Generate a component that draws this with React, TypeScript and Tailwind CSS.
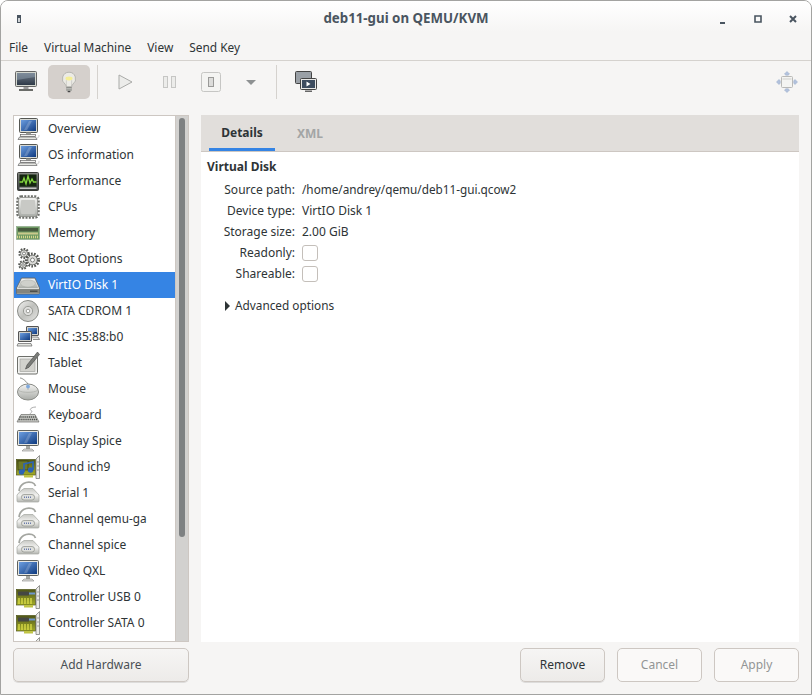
import React from "react";

const P = ({ children, s = 24 }: { children: React.ReactNode; s?: number }) => (
  <svg width={s} height={s} viewBox="0 0 24 24" className="shrink-0">{children}</svg>
);

const Defs = () => (
  <svg width="0" height="0" className="absolute">
    <defs>
      <linearGradient id="scr" x1="0" y1="0" x2="1" y2="1"><stop offset="0" stopColor="#6c9ee0" /><stop offset="1" stopColor="#0f3a80" /></linearGradient>
      <linearGradient id="gry" x1="0" y1="0" x2="0" y2="1"><stop offset="0" stopColor="#f4f4f2" /><stop offset="1" stopColor="#a9aca7" /></linearGradient>
      <linearGradient id="ser" x1="0" y1="0" x2="0" y2="1"><stop offset="0" stopColor="#c8c9c5" /><stop offset=".5" stopColor="#f2f2f0" /><stop offset="1" stopColor="#b5b7b2" /></linearGradient>
      <linearGradient id="drk" x1="0" y1="0" x2="0" y2="1"><stop offset="0" stopColor="#888a85" /><stop offset="1" stopColor="#3a3e3f" /></linearGradient>
      <linearGradient id="pcb" x1="0" y1="0" x2="0" y2="1"><stop offset="0" stopColor="#4f5618" /><stop offset="1" stopColor="#a3ac28" /></linearGradient>
      <linearGradient id="cd" x1="0" y1="0" x2="1" y2="1"><stop offset="0" stopColor="#f4f4f3" /><stop offset=".5" stopColor="#bfc0bc" /><stop offset="1" stopColor="#e6e6e4" /></linearGradient>
      <linearGradient id="bar" x1="0" y1="0" x2="0" y2="1"><stop offset="0" stopColor="#6f7a87" /><stop offset="1" stopColor="#2f3a48" /></linearGradient>
    </defs>
  </svg>
);

const Desktop = () => (
  <P>
    <rect x="3.500" y="1.500" width="18" height="14" rx="1" fill="#d9dbd6" stroke="#555753" />
    <rect x="5" y="3" width="15" height="11" fill="url(#scr)" />
    <path d="M8 13l5-9h3l-5 9z" fill="#fff" opacity=".2" />
    <rect x="10" y="15.500" width="5" height="2" fill="#9a9c97" />
    <rect x="4.500" y="17.500" width="15" height="2" fill="#f2f2f0" stroke="#666" strokeWidth=".7" />
    <path d="M3.500 20h16l1.500 2.500H2z" fill="#e4e5e1" stroke="#666" strokeWidth=".7" />
    <path d="M21 21c1.500 0 2-1 2-3" fill="none" stroke="#bbb" strokeWidth=".7" />
  </P>
);
const Perf = () => (
  <P>
    <rect x="1.500" y="3.500" width="21" height="18" rx="1" fill="url(#drk)" stroke="#3a3c38" />
    <rect x="3.500" y="5.500" width="17" height="12" fill="#14260f" />
    <path d="M3.500 13h3l1.500-4 2 6 2-8 2 7 2-4 1.500 3h3" fill="none" stroke="#83d63f" strokeWidth="1.300" />
    <rect x="3.500" y="18.500" width="17" height="1.500" fill="#c4c4c2" />
  </P>
);
const Cpu = () => (
  <P>
    <rect x="1.500" y="1.500" width="21" height="21" rx="3.500" fill="none" stroke="#6f716c" strokeWidth="2.500" strokeDasharray="2 1.300" />
    <rect x="2.500" y="2.500" width="19" height="19" rx="2.500" fill="url(#gry)" stroke="#8a8c87" strokeWidth=".8" />
    <rect x="5" y="5" width="14" height="14" rx="1" fill="#c8c9c5" />
  </P>
);
const Mem = () => (
  <P>
    <rect x=".5" y="5.500" width="23" height="13" fill="#6f9a64" stroke="#8aa585" strokeWidth=".6" />
    <rect x="2" y="7" width="20" height="3.500" fill="#475a3e" />
    <rect x="2" y="11.500" width="20" height="2" fill="#c9c98c" />
    <path d="M1 16h22" stroke="#d6d48a" strokeWidth="2.500" strokeDasharray="1 1" />
  </P>
);
const Gear = ({ x, y, r }: { x: number; y: number; r: number }) => (
  <g>
    <circle cx={x} cy={y} r={r} fill="none" stroke="#555753" strokeWidth={r * 0.5} strokeDasharray="1.600 1.300" />
    <circle cx={x} cy={y} r={r * 0.8} fill="#dcdcd9" stroke="#555753" strokeWidth=".7" />
    <circle cx={x} cy={y} r={r * 0.33} fill="#fff" stroke="#555753" strokeWidth=".7" />
  </g>
);
const Boot = () => (
  <P>
    <Gear x={8} y={6.500} r={4.500} />
    <Gear x={16.500} y={13} r={6} />
    <Gear x={7} y={18} r={3.800} />
  </P>
);
const Disk = () => (
  <P>
    <path d="M5.500 5h13.500l4.500 10v5a1 1 0 01-1 1H1.500a1 1 0 01-1-1v-5z" fill="#dededb" stroke="#5f615d" strokeWidth=".8" />
    <path d="M6 6h12.500l3.500 9H2z" fill="url(#gry)" />
    <ellipse cx="12" cy="10.500" rx="7.500" ry="3.600" fill="#cfd0cb" stroke="#a4a6a1" strokeWidth=".5" />
    <rect x="1" y="16" width="22" height="4.500" fill="#83857f" />
    <rect x="14" y="17.500" width="7.500" height="1.500" fill="#4c4e4a" />
  </P>
);
const Cd = () => (
  <P>
    <circle cx="12" cy="12" r="10.500" fill="url(#cd)" stroke="#8a8c87" />
    <circle cx="12" cy="12" r="4.600" fill="#dfdfdd" stroke="#9a9c97" />
    <circle cx="12" cy="12" r="1.800" fill="#fff" stroke="#8a8c87" strokeWidth=".8" />
  </P>
);
const Nic = () => (
  <P>
    <rect x="10.500" y="1.500" width="12" height="9" rx=".5" fill="#cfd0cc" stroke="#555" />
    <rect x="12" y="3" width="9" height="6" fill="url(#scr)" />
    <path d="M14 12h8l1.500 2.500H17" fill="#e4e5e1" stroke="#666" strokeWidth=".7" />
    <rect x="2.500" y="6.500" width="13" height="10" rx=".5" fill="#cfd0cc" stroke="#555" />
    <rect x="4" y="8" width="10" height="7" fill="url(#scr)" />
    <path d="M2 18.500h13l1 2.500H1z" fill="#e4e5e1" stroke="#666" strokeWidth=".7" />
  </P>
);
const Tablet = () => (
  <P>
    <rect x="1.500" y="5.500" width="20" height="17.500" rx="1.500" fill="#f2f2f0" stroke="#6d6f6a" />
    <rect x="4" y="8" width="15" height="12.500" fill="#d2d2cd" stroke="#9a9c97" strokeWidth=".6" />
    <path d="M21.500 1L11 14l-1.500 4 3.500-1.800L23.500 3.500z" fill="#7a7c78" stroke="#444" strokeWidth=".6" />
  </P>
);
const Mouse = () => (
  <P>
    <path d="M4 1c2 0 5 2 8 6" fill="none" stroke="#7d7f7a" strokeWidth=".9" />
    <ellipse cx="12" cy="15" rx="10.500" ry="8" fill="url(#gry)" stroke="#8a8c87" />
    <path d="M2.500 13.500c4 2.500 15 2.500 19 0" fill="none" stroke="#b5b7b2" />
    <path d="M12 7v6" stroke="#b5b7b2" />
    <circle cx="12" cy="9.500" r="1.900" fill="#7fa9dd" />
  </P>
);
const Kbd = () => (
  <P>
    <path d="M20 4c-4 0-7 2-5 3.500 2 1 0 2-1 3.500" fill="none" stroke="#999" strokeWidth=".8" />
    <path d="M5 11.500h14l4 7.500H1z" fill="#c9cac6" stroke="#6d6f6a" strokeWidth=".7" />
    <path d="M3.500 14h17M2.700 16.500h18.600" stroke="#4f514d" strokeWidth="1.400" strokeDasharray="1.200 .7" />
  </P>
);
const Display = () => (
  <P>
    <rect x="1.500" y="1.500" width="21" height="15" rx="1" fill="#e6e7e3" stroke="#5f615d" />
    <rect x="3" y="3" width="18" height="12" fill="url(#scr)" />
    <path d="M8 14l5-10h3l-5 10z" fill="#fff" opacity=".18" />
    <rect x="10" y="17" width="4" height="3" fill="#a5a7a2" />
    <path d="M6 22l2-2h8l2 2z" fill="#dcdcd9" stroke="#888" strokeWidth=".6" />
  </P>
);
const Serial = () => (
  <P>
    <path d="M3 10C4 3 10 0 16 1.500c2 .5 3 2 3.500 3.500" fill="none" stroke="#a4a6a1" strokeWidth="1.800" />
    <path d="M4.500 10L8 7.500h9L23 14v6a1 1 0 01-1 1H2a1 1 0 01-1-1v-6z" fill="url(#ser)" stroke="#a4a6a1" strokeWidth=".7" />
    <rect x="5.500" y="13.500" width="13" height="5.500" rx="2.500" fill="#dfe0dc" stroke="#8a8c87" strokeWidth=".7" />
    <path d="M8 16.300h8" stroke="#6a7bab" strokeWidth="1.400" strokeDasharray="1 1" />
  </P>
);
const Card = ({ sound }: { sound?: boolean }) => (
  <P>
    <rect x=".5" y="4.500" width="19" height="15.500" fill="url(#pcb)" stroke="#4f5518" strokeWidth=".7" />
    <rect x="8" y="20" width="9" height="2.500" fill="#c0c446" />
    <path d="M20 4l3.500-3.500V23.500H20z" fill="#ecece9" stroke="#6d6f6a" strokeWidth=".7" />
    <path d="M21.500 7h1M21.500 11h1M21.500 15h1" stroke="#555" />
    {sound ? (
      <>
        <rect x="2" y="6" width="10" height="9" fill="#6f7a2a" stroke="#34390e" strokeWidth=".6" />
        <path d="M8 17V9l9-2v8" fill="none" stroke="#2c63b5" strokeWidth="1.700" />
        <circle cx="5.500" cy="17" r="2.700" fill="#2c63b5" />
        <circle cx="14.500" cy="15" r="2.700" fill="#2c63b5" />
      </>
    ) : (
      <>
        <rect x="2" y="6.500" width="11" height="4" rx=".5" fill="#454743" />
        <rect x="13" y="7.500" width="6" height="2" fill="#6d96cf" />
        <path d="M3 19v-6M6 19v-6M9 19v-6M12 19v-6M15 19v-6" stroke="#dfe04a" strokeWidth="1.300" />
      </>
    )}
  </P>
);

const rows: [React.ReactNode, string][] = [
  [<Desktop />, "Overview"],
  [<Desktop />, "OS information"],
  [<Perf />, "Performance"],
  [<Cpu />, "CPUs"],
  [<Mem />, "Memory"],
  [<Boot />, "Boot Options"],
  [<Disk />, "VirtIO Disk 1"],
  [<Cd />, "SATA CDROM 1"],
  [<Nic />, "NIC :35:88:b0"],
  [<Tablet />, "Tablet"],
  [<Mouse />, "Mouse"],
  [<Kbd />, "Keyboard"],
  [<Display />, "Display Spice"],
  [<Card sound />, "Sound ich9"],
  [<Serial />, "Serial 1"],
  [<Serial />, "Channel qemu-ga"],
  [<Serial />, "Channel spice"],
  [<Display />, "Video QXL"],
  [<Card />, "Controller USB 0"],
  [<Card />, "Controller SATA 0"],
  [<Card />, ""],
];

const Btn = ({ children, off, w }: { children: string; off?: boolean; w: string }) => (
  <button
    className={`h-[34px] rounded-[5px] border text-[12px] ${w} ${
      off
        ? "border-[#cdc7c2] bg-[#faf9f8] text-[#929595]"
        : "border-[#cdc7c2] bg-gradient-to-b from-[#f6f5f4] to-[#edebe9] text-[#2e3436] shadow-[0_1px_0_rgba(0,0,0,0.1)]"
    }`}
  >
    {children}
  </button>
);

const Field = ({ label, children }: { label: string; children: React.ReactNode }) => (
  <div className="flex h-[21px] items-center">
    <div className="w-[88px] text-right text-[#2e3436]">{label}</div>
    <div className="ml-[7px] flex items-center">{children}</div>
  </div>
);

const Check = () => <div className="h-4 w-4 rounded-[3px] border border-[#c4bfba] bg-white" />;

export default function App() {
  return (
    <div
      className="flex h-[695px] w-[812px] flex-col overflow-hidden rounded-t-[8px] border border-[#a3a3a1] bg-[#f6f5f4] text-[12px] text-[#2e3436]"
      style={{ fontFamily: '"Noto Sans", sans-serif' }}
    >
      <Defs />
      <header className="flex h-[31px] shrink-0 items-center bg-gradient-to-b from-white to-[#f6f5f4] pt-[4px]">
        <div className="flex w-[97px] shrink-0 pl-[16px]">
          <svg width="4" height="8" viewBox="0 0 4 8">
            <rect width="4" height="8" fill="#4a5560" />
            <rect x="1" y="3" width="2" height="4" fill="#cfd3d6" />
          </svg>
        </div>
        <div className="flex-1 text-center text-[13.3px] leading-none font-bold text-[#4a5560]">deb11-gui on QEMU/KVM</div>
        <div className="flex w-[97px] shrink-0 items-center justify-end pr-[13px]">
          <svg width="10" height="10" viewBox="0 0 10 10" className="shrink-0">
            <rect x="2" y="8" width="5" height="2" fill="#4a5560" />
          </svg>
          <svg width="10" height="10" viewBox="0 0 10 10" className="ml-[25px] shrink-0">
            <path d="M2 2h6v6H2z" fill="none" stroke="#4a5560" strokeWidth="1.600" />
          </svg>
          <svg width="10" height="10" viewBox="0 0 10 10" className="ml-[25px] shrink-0">
            <path d="M2 2l6 6M8 2l-6 6" stroke="#4a5560" strokeWidth="2" />
          </svg>
        </div>
      </header>

      <nav className="flex h-[29px] shrink-0 items-center gap-[16px] border-b border-[#d5d2ce] pt-[3px] pl-[8px] text-[11.9px]">
        <span>File</span>
        <span>Virtual Machine</span>
        <span>View</span>
        <span>Send Key</span>
      </nav>

      <div className="flex h-[42px] shrink-0 items-center pr-[13px] pl-[13px]">
        <div className="flex h-[34px] w-[34px] items-center pl-[1px]">
          <svg width="23" height="22" viewBox="0 0 23 22">
            <rect x=".5" y=".5" width="21" height="15" rx="1" fill="#d3d7cf" stroke="#666" />
            <rect x="2" y="2" width="18" height="12" fill="url(#bar)" />
            <path d="M2 2h18v4L2 9z" fill="#8d9dad" opacity=".5" />
            <rect x="8.500" y="16" width="5" height="2" fill="#999" />
            <rect x="4" y="18" width="14" height="2" fill="#6a6c68" />
          </svg>
        </div>
        <div className="flex h-[34px] w-[42px] items-center justify-center rounded-[5px] bg-[#d5d0cc]">
          <svg width="16" height="22" viewBox="0 0 18 24">
            <path d="M9 1a7.500 7.500 0 00-4.300 13.600c1 1 1.300 1.900 1.300 2.900h6c0-1 .3-1.900 1.300-2.900A7.500 7.500 0 009 1z" fill="#ecebe5" stroke="#b0b0ab" />
            <ellipse cx="9" cy="8" rx="4" ry="2.200" fill="#f5ef96" />
            <path d="M6 17V10M12 17V10" stroke="#bdbdb8" strokeWidth=".7" fill="none" />
            <rect x="6" y="17.500" width="6" height="4.500" fill="#757772" />
            <path d="M6 19h6M6 21h6" stroke="#dcdcd9" />
            <rect x="7.500" y="22" width="3" height="1.500" fill="#444" />
          </svg>
        </div>
        <div className="mx-[7px] h-[34px] w-px bg-[#d5d2ce]" />
        <div className="flex w-[40px] items-center justify-center">
          <svg width="15" height="16" viewBox="0 0 15 16">
            <path d="M1 1l13 7-13 7z" fill="#ececea" stroke="#a9aaa8" />
          </svg>
        </div>
        <div className="flex w-[48px] items-center justify-center">
          <svg width="13" height="12" viewBox="0 0 13 12">
            <rect x=".5" y=".5" width="4" height="11" fill="#ececea" stroke="#c6c6c4" />
            <rect x="8.500" y=".5" width="4" height="11" fill="#ececea" stroke="#c6c6c4" />
          </svg>
        </div>
        <div className="flex w-[36px] items-center justify-center">
          <svg width="20" height="20" viewBox="0 0 20 20">
            <rect x=".5" y=".5" width="19" height="19" rx="2" fill="#f4f4f2" stroke="#c6c6c4" />
            <rect x="7.500" y="5.500" width="5" height="9" fill="#dcdcda" stroke="#9a9a98" />
          </svg>
        </div>
        <div className="ml-[12px] flex w-[20px] items-center justify-center">
          <div className="h-0 w-0 border-x-[5px] border-t-[5px] border-x-transparent border-t-[#8e9192]" />
        </div>
        <div className="mx-[15px] h-[34px] w-px bg-[#d5d2ce]" />
        <div className="ml-[3px] flex items-center">
          <svg width="22" height="22" viewBox="0 0 22 22">
            <rect x=".5" y=".5" width="16" height="12" rx="1" fill="#9aa0a6" stroke="#444" />
            <rect x="5.500" y="7.500" width="16" height="11" rx="1" fill="#e8e8e6" stroke="#444" />
            <rect x="7" y="9" width="13" height="8" fill="#3d4c5f" />
            <path d="M11.500 10.500l4 2.500-4 2.500z" fill="#fff" />
            <rect x="10" y="19.500" width="7" height="1.500" fill="#666" />
          </svg>
        </div>
        <div className="ml-auto flex items-center">
          <svg width="22" height="22" viewBox="0 0 22 22">
            <rect x="5.500" y="5.500" width="11" height="11" rx="1" fill="#f4f4f2" stroke="#b9b9b7" />
            <path d="M6.500 8h9" stroke="#d0d0ce" />
            <path d="M11 .5l2.500 2.500a3 3 0 01-5 0zM11 21.500l2.500-2.500a3 3 0 00-5 0zM.5 11l2.500-2.500a3 3 0 010 5zM21.500 11l-2.500-2.500a3 3 0 000 5z" fill="#b2c2dd" stroke="#9fb0cf" strokeWidth=".6" />
          </svg>
        </div>
      </div>

      <main className="flex min-h-0 flex-1 gap-[12px] pt-[12px] pr-[12px] pb-[12px] pl-[12px]">
        <div className="flex w-[176px] shrink-0 flex-col gap-[6px]">
          <div className="flex min-h-0 flex-1 border border-[#cdc7c2] bg-white">
            <div className="w-[161px] overflow-hidden">
              {rows.map(([icon, name], i) => {
                const sel = name === "VirtIO Disk 1";
                return (
                  <div
                    key={i}
                    className={`flex h-[26px] items-center pl-[2px] ${sel ? "bg-[#3584e4] text-white" : ""}`}
                  >
                    <div className="flex w-[32px] shrink-0 items-center">{icon}</div>
                    {name && <span className={name === "Channel qemu-ga" ? "text-[11.8px]" : ""}>{name}</span>}
                  </div>
                );
              })}
            </div>
            <div className="flex-1 border-l border-[#cdc7c2] bg-[#d2d1cf] px-[3px] pt-[2px]">
              <div className="h-[419px] rounded-full bg-[#7e8182]" />
            </div>
          </div>
          <button className="h-[34px] rounded-[5px] border border-[#cdc7c2] bg-gradient-to-b from-[#f6f5f4] to-[#edebe9] text-[#4a5055] shadow-[0_1px_0_rgba(0,0,0,0.1)]">
            Add Hardware
          </button>
        </div>

        <div className="flex min-w-0 flex-1 flex-col gap-[6px]">
          <div className="flex min-h-0 flex-1 flex-col bg-white">
            <div className="flex h-[37px] shrink-0 border-b border-[#cdc7c2] bg-[#e1dedb] pl-[8px] font-bold">
              <div className="flex w-[66px] items-center justify-center border-b-[3px] border-[#3584e4] pt-[2px]">Details</div>
              <div className="ml-[2px] flex w-[66px] items-center justify-center pt-[1px] text-[#a3a5a5]">XML</div>
            </div>
            <div className="pt-[6px] pl-[6px]">
              <div className="flex h-[18px] items-center font-bold">Virtual Disk</div>
              <div className="mt-[3px]">
                <Field label="Source path:"><span className="text-[11.75px]">/home/andrey/qemu/deb11-gui.qcow2</span></Field>
                <Field label="Device type:">VirtIO Disk 1</Field>
                <Field label="Storage size:">2.00 GiB</Field>
                <Field label="Readonly:"><Check /></Field>
                <Field label="Shareable:"><Check /></Field>
              </div>
              <div className="mt-[13px] ml-[18px] flex h-[18px] items-center gap-[5px]">
                <div className="h-0 w-0 border-y-[5px] border-l-[5px] border-y-transparent border-l-[#2e3436]" />
                <span className="text-[11.8px]">Advanced options</span>
              </div>
            </div>
          </div>
          <div className="flex shrink-0 justify-end gap-[12px]">
            <Btn w="w-[85px]">Remove</Btn>
            <Btn w="w-[85px]" off>Cancel</Btn>
            <Btn w="w-[85px]" off>Apply</Btn>
          </div>
        </div>
      </main>
    </div>
  );
}
